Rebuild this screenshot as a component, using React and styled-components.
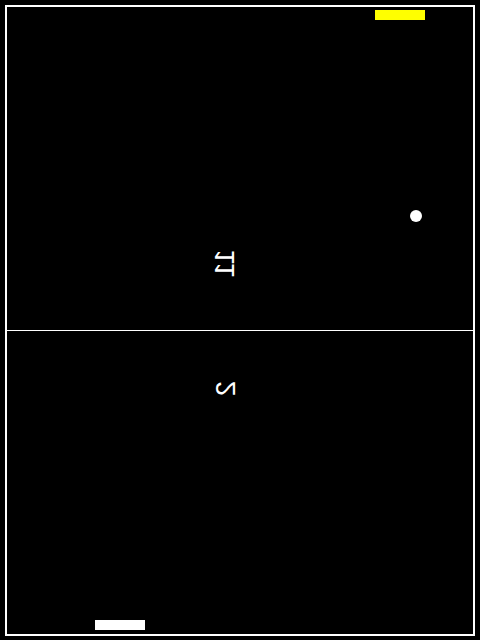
import React from 'react';
import styled, { createGlobalStyle } from 'styled-components';

const GlobalStyle = createGlobalStyle`
  html, body {
    margin: 0;
    padding: 0;
    background: #000;
  }
  body {
    font-family: "Liberation Sans", Arial, sans-serif;
  }
`;

const Board = styled.div`
  position: relative;
  box-sizing: border-box;
  margin: 5px;
  width: 470px;
  height: 631px;
  border: 2px solid #fff;
  background: #000;
  display: flex;
  flex-direction: column;
`;

const Half = styled.div`
  display: flex;
  height: ${p => p.height}px;
  padding-left: ${p => p.indent}px;
  padding-top: ${p => p.top}px;
  box-sizing: border-box;
  align-items: flex-start;
`;

const NetLine = styled.div`
  height: 1px;
  background: #fff;
`;

// scores are drawn transposed (x and y swapped), like the canvas original
const Score = styled.span`
  display: inline-block;
  color: #fff;
  font-size: 27px;
  line-height: 27px;
  transform: matrix(0, 1, 1, 0, 0, 0);
  transform-origin: center;
`;

const Paddle = styled.div`
  position: absolute;
  width: 50px;
  height: 10px;
  background: ${p => p.color};
`;

const Ball = styled.div`
  position: absolute;
  width: 12px;
  height: 12px;
  border-radius: 50%;
  background: #fff;
`;

const game = {
  top: { score: 11, paddle: { x: 368, y: 3, color: '#ffff00' } },
  bottom: { score: 2, paddle: { x: 88, y: 613, color: '#ffffff' } },
  ball: { x: 403, y: 203 },
};

export default function App() {
  return (
    <>
      <GlobalStyle />
      <Board>
        <Half height={323} indent={204} top={243}>
          <Score>{game.top.score}</Score>
        </Half>
        <NetLine />
        <Half height={303} indent={212} top={44}>
          <Score>{game.bottom.score}</Score>
        </Half>
        <Paddle
          color={game.top.paddle.color}
          style={{ left: game.top.paddle.x, top: game.top.paddle.y }}
        />
        <Paddle
          color={game.bottom.paddle.color}
          style={{ left: game.bottom.paddle.x, top: game.bottom.paddle.y }}
        />
        <Ball style={{ left: game.ball.x, top: game.ball.y }} />
      </Board>
    </>
  );
}
